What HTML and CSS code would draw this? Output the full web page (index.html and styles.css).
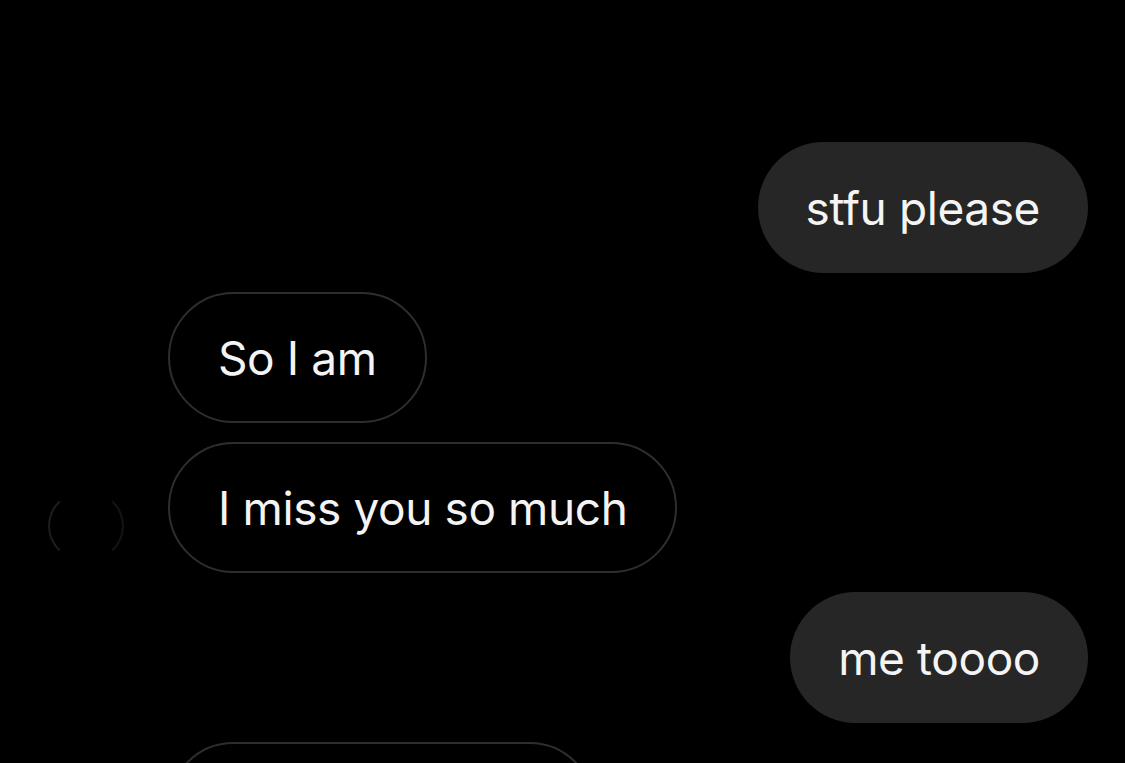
FILE: index.html
```html
<!DOCTYPE html>
<html>
<head>
<meta charset="utf-8">
<link rel="stylesheet" href="styles.css">
</head>
<body>
<div class="thread">
  <div class="row sent"><div class="bubble filled">stfu please</div></div>
  <div class="row recv"><div class="slot"></div><div class="bubble outline">So I am</div></div>
  <div class="row recv"><div class="slot"><div class="avatar"></div></div><div class="bubble outline">I miss you so much</div></div>
  <div class="row sent"><div class="bubble filled">me toooo</div></div>
  <div class="row recv"><div class="slot"></div><div class="bubble outline last">&nbsp;</div></div>
</div>
</body>
</html>
```
FILE: styles.css
```css
html, body {
  margin: 0;
  padding: 0;
  background: #000;
  width: 1125px;
  height: 763px;
  overflow: hidden;
}
.thread {
  display: flex;
  flex-direction: column;
  gap: 19px;
  padding: 142px 37px 0 48px;
  height: 763px;
  box-sizing: border-box;
  overflow: hidden;
  font-family: Inter, "Noto Sans", sans-serif;
}
.row {
  display: flex;
  flex: none;
}
.sent {
  justify-content: flex-end;
}
.recv {
  justify-content: flex-start;
  gap: 44px;
}
.slot {
  width: 76px;
  flex: none;
  display: flex;
  align-items: center;
  padding-top: 36px;
  box-sizing: border-box;
}
.avatar {
  width: 76px;
  height: 72px;
  border-radius: 50%;
  border: 2px solid transparent;
  border-left-color: #1e1e1e;
  border-right-color: #141414;
  box-sizing: border-box;
}
.bubble {
  height: 131px;
  border-radius: 66px;
  box-sizing: border-box;
  display: flex;
  align-items: center;
  padding: 0 48px;
  font-size: 46px;
  letter-spacing: -0.4px;
  color: #f4f4f4;
  white-space: nowrap;
}
.filled {
  background: #262626;
}
.outline {
  border: 2px solid #2e2e2e;
  background: #000;
}
.last {
  width: 427px;
}
```
